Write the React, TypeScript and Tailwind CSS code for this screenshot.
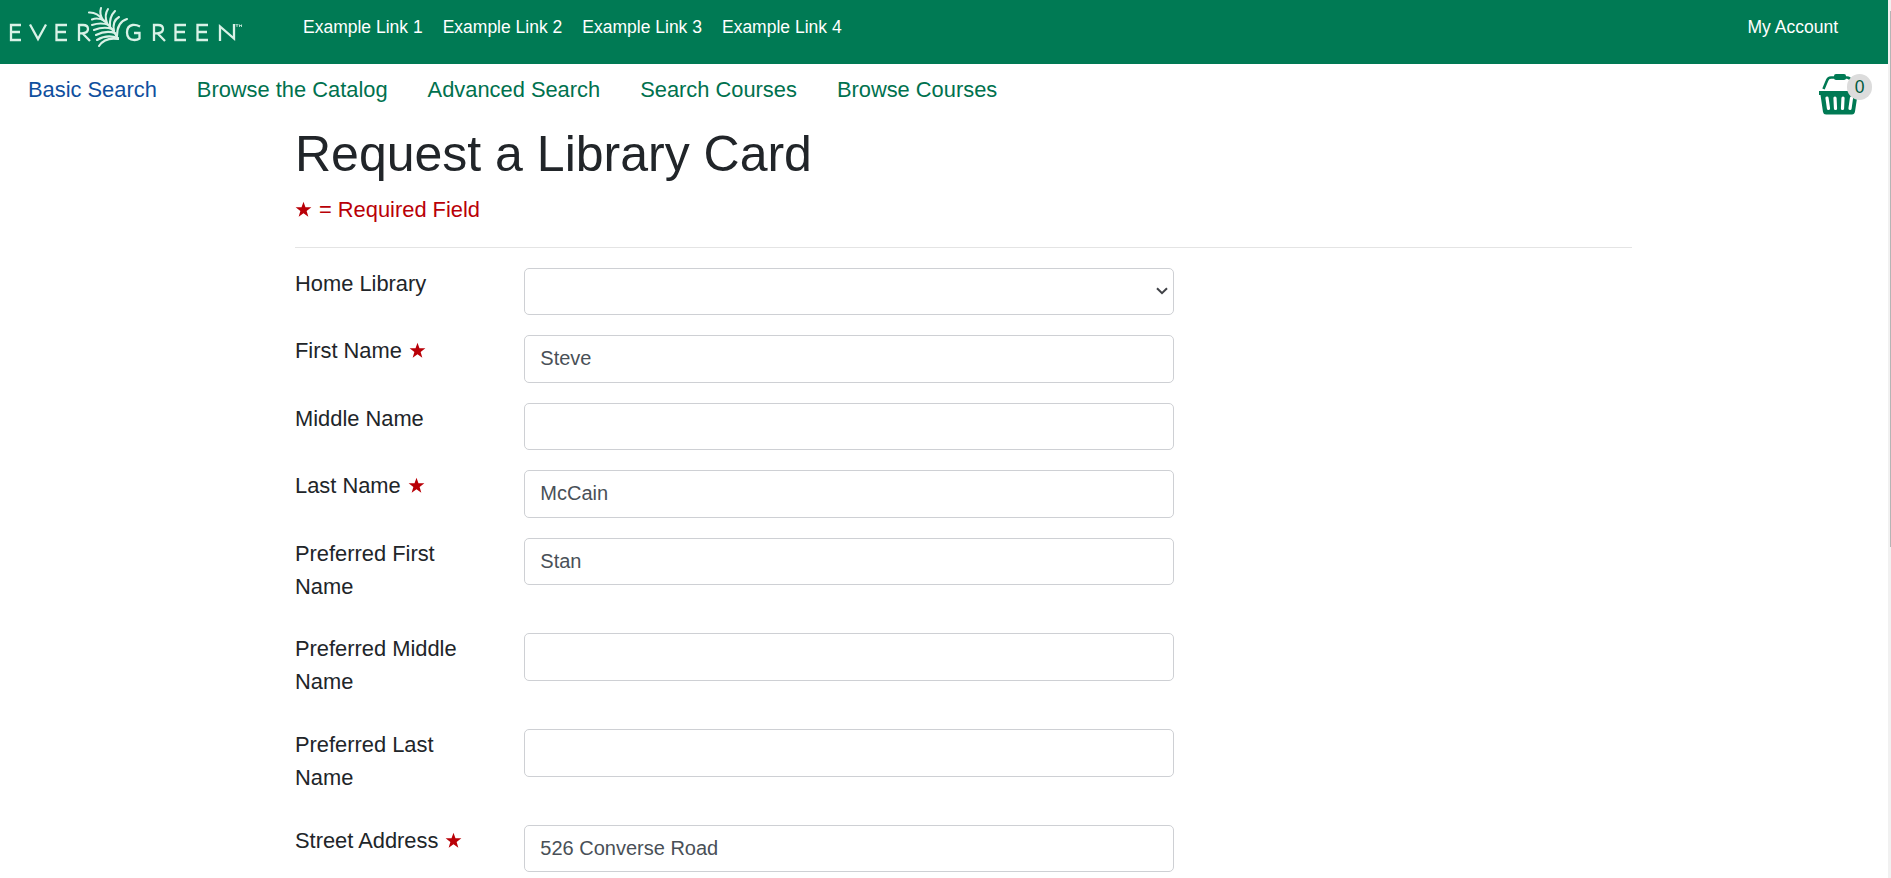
import React from "react";

const Star = ({ className = "" }: { className?: string }) => (
  <svg viewBox="0 0 16 16" className={"inline-block h-[17px] w-[17px] fill-[#b90007] " + className}>
    <path d="M8 .6l1.850 5.350h5.550l-4.450 3.400 1.600 5.450L8 11.500l-4.550 3.300 1.600-5.450L.6 5.950h5.550z" />
  </svg>
);

const Logo = () => (
  <svg viewBox="0 0 260 64" className="h-[64px] w-[260px] shrink-0" fill="none" stroke="#d9f2e7" strokeWidth="2.300">
    <path d="M21 25H11V40H21M11 32H20" />
    <path d="M30 24.500L38 39L46 24.500" />
    <path d="M67 25H56.500V40H67M56.500 32H66" />
    <path d="M79 41V25H83Q88 25 88 29T82 33.300H79M82.500 33.300L90 41" />
    <path d="M140 26.500Q136 24.500 132.500 25Q127 26 127 32.500Q127 40 134.500 40Q137.500 40 139.500 38.500V33H134" />
    <path d="M154 41V25H158Q163 25 163 29T157 33.300H154M157.500 33.300L165 41" />
    <path d="M186 25H175.500V40H186M175.500 32H185" />
    <path d="M208 25H197.500V40H208M197.500 32H207" />
    <path d="M220 41V26.500L234 38.500V24" />
    <path d="M235.500 24.700H238.500M237 24.700V27M239.500 27V24.700L240.500 26L241.500 24.700V27" strokeWidth=".8" />
    <g strokeLinecap="round" strokeWidth="2.100">
      <path d="M118 39Q112 27 103 20Q97 12 89 12.500" />
      <path d="M103 20Q99 14 101 8" />
      <path d="M107 23Q104 15 108 9" />
      <path d="M110 27Q109 17 115 11" />
      <path d="M114 31Q112 21 119 17" />
      <path d="M117 36Q117 22 127 19" />
      <path d="M105 21Q98 17 92 19.500" />
      <path d="M109 25Q101 22 92 25" />
      <path d="M112 29Q104 26 94 30" />
      <path d="M115 33Q106 30 96 35" />
      <path d="M118 38Q107 34 97 40" />
      <path d="M118 39Q105 37 99 46" />
    </g>
  </svg>
);

const Basket = () => (
  <svg viewBox="0 0 40 41" className="h-[41px] w-[40px]">
    <path d="M4.500 15L8 6.500Q9 3.500 12 3.500H28Q31 3.500 32 7L35 16" fill="none" stroke="#007a54" strokeWidth="2.600" />
    <rect x="15" y="0" width="12" height="6" rx="2" fill="#007a54" />
    <path d="M0 17H40V21H38.500L36 37.500Q35.500 40.500 33 40.500H7Q4.500 40.500 4 38L1.500 21H0Z" fill="#007a54" />
    <path d="M8 24L9.500 34.500M16 24L16.500 34.500M24 24L23.500 34.500M32.500 24L31 34.500" stroke="#fff" strokeWidth="3.200" strokeLinecap="round" />
  </svg>
);

const links = ["Example Link 1", "Example Link 2", "Example Link 3", "Example Link 4"];
const tabs = ["Basic Search", "Browse the Catalog", "Advanced Search", "Search Courses", "Browse Courses"];

type Field = { label: string; value?: string; required?: boolean; select?: boolean };
const fields: Field[] = [
  { label: "Home Library", select: true },
  { label: "First Name", value: "Steve", required: true },
  { label: "Middle Name" },
  { label: "Last Name", value: "McCain", required: true },
  { label: "Preferred First Name", value: "Stan" },
  { label: "Preferred Middle Name" },
  { label: "Preferred Last Name" },
  { label: "Street Address", value: "526 Converse Road", required: true },
];

const Row = ({ label, value = "", required, select }: Field) => (
  <div className="mb-5 flex items-start">
    <label className="-mt-px mb-[10.700px] w-[229.300px] shrink-0 pr-[50px] text-[21.875px] leading-[33px]">
      {label}
      {required && <Star className="ml-[7px] align-[-1px]" />}
    </label>
    {select ? (
      <div className="flex h-[47.500px] w-[650px] items-center justify-end rounded-[5px] border border-[#ced0d4] bg-white pr-[5px]">
        <svg viewBox="0 0 12 8" className="h-[8px] w-[12px]" fill="none" stroke="#404247" strokeWidth="2">
          <path d="M1 1.200L6 6.200L11 1.200" />
        </svg>
      </div>
    ) : (
      <input
        defaultValue={value}
        className="h-[47.500px] w-[650px] rounded-[5px] border border-[#ced0d4] bg-white px-[15px] text-[20px] text-[#495057] outline-none"
      />
    )}
  </div>
);

export default function App() {
  return (
    <div className="flex h-[878px] overflow-hidden bg-white font-['Liberation_Sans',Arial,sans-serif] text-[#212529]">
      <div className="flex min-w-0 flex-1 flex-col">
        <header className="flex h-[64px] shrink-0 bg-[#007a54] text-[17.500px] leading-[26px] text-white">
          <Logo />
          <nav className="ml-[43px] flex gap-[20px] pt-[14px]">
            {links.map((l) => (
              <a key={l}>{l}</a>
            ))}
          </nav>
          <a className="mr-[50px] ml-auto pt-[14px]">My Account</a>
        </header>
        <div className="flex h-[56px] shrink-0 justify-between pl-[28px]">
          <nav className="flex gap-[40px] pt-[9px] text-[21.875px] leading-[33px] text-[#00714e]">
            {tabs.map((t, i) => (
              <a key={t} className={i === 0 ? "text-[#0f4f9e]" : ""}>{t}</a>
            ))}
          </nav>
          <div className="relative mr-[29px] pt-[10px]">
            <Basket />
            <span className="absolute top-[10px] left-[28px] flex h-[26px] w-[25px] items-center justify-center rounded-full bg-[#dcdcdc] text-[17.500px] text-[#00593d]">0</span>
          </div>
        </div>
        <main className="ml-[295px] w-[1337px]">
          <h1 className="mt-[4px] text-[50px] leading-[60px]">Request a Library Card</h1>
          <p className="mt-[9px] text-[21.875px] leading-[33px] text-[#b90007]">
            <Star className="mr-[7px] align-[-1px]" />= Required Field
          </p>
          <hr className="mt-[21px] mb-[19.700px] border-[#e4e4e4]" />
          {fields.map((f) => (
            <Row key={f.label} {...f} />
          ))}
        </main>
      </div>
      <div className="flex w-[3px] shrink-0 justify-end bg-[#f1f1f1] pt-[11px]">
        <div className="h-[536px] w-px bg-[#b5b5b5]" />
      </div>
    </div>
  );
}
